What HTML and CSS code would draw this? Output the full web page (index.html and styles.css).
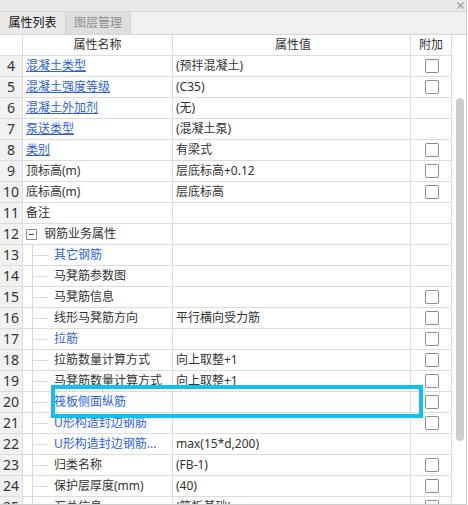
FILE: index.html
```html
<!DOCTYPE html>
<html lang="zh">
<head>
<meta charset="utf-8">
<title>属性列表</title>
<link rel="stylesheet" href="styles.css">
</head>
<body>
<div class="panel">
  <div class="titlebar">
    <svg class="close" width="7" height="7" viewBox="0 0 7 7"><path d="M0.5 0.5L6.5 6.5M6.5 0.5L0.5 6.5" stroke="#9c9c9c" stroke-width="1.1" fill="none"/></svg>
  </div>
  <div class="tabs">
    <div class="tab active">属性列表</div>
    <div class="tab inactive">图层管理</div>
  </div>
  <div class="content">
    <div class="grid">
      <div class="row head"><div class="num"></div><div class="name c">属性名称</div><div class="val c">属性值</div><div class="add c">附加</div></div>
      <div class="row"><div class="num">4</div><div class="name"><span class="link u">混凝土类型</span></div><div class="val">(预拌混凝土)</div><div class="add"><i class="cb"></i></div></div>
      <div class="row"><div class="num">5</div><div class="name"><span class="link u">混凝土强度等级</span></div><div class="val">(C35)</div><div class="add"><i class="cb"></i></div></div>
      <div class="row"><div class="num">6</div><div class="name"><span class="link u">混凝土外加剂</span></div><div class="val">(无)</div><div class="add"></div></div>
      <div class="row"><div class="num">7</div><div class="name"><span class="link u">泵送类型</span></div><div class="val">(混凝土泵)</div><div class="add"></div></div>
      <div class="row"><div class="num">8</div><div class="name"><span class="link u">类别</span></div><div class="val">有梁式</div><div class="add"><i class="cb"></i></div></div>
      <div class="row"><div class="num">9</div><div class="name">顶标高(m)</div><div class="val">层底标高+0.12</div><div class="add"><i class="cb"></i></div></div>
      <div class="row"><div class="num">10</div><div class="name">底标高(m)</div><div class="val">层底标高</div><div class="add"><i class="cb"></i></div></div>
      <div class="row"><div class="num">11</div><div class="name">备注</div><div class="val"></div><div class="add"></div></div>
      <div class="row"><div class="num">12</div><div class="name group"><span class="toggle"></span><span>钢筋业务属性</span></div><div class="val"></div><div class="add"></div></div>
      <div class="row"><div class="num">13</div><div class="name child"><span class="tree"></span><span class="link">其它钢筋</span></div><div class="val"></div><div class="add"></div></div>
      <div class="row"><div class="num">14</div><div class="name child"><span class="tree"></span><span>马凳筋参数图</span></div><div class="val"></div><div class="add"></div></div>
      <div class="row"><div class="num">15</div><div class="name child"><span class="tree"></span><span>马凳筋信息</span></div><div class="val"></div><div class="add"><i class="cb"></i></div></div>
      <div class="row"><div class="num">16</div><div class="name child"><span class="tree"></span><span>线形马凳筋方向</span></div><div class="val">平行横向受力筋</div><div class="add"><i class="cb"></i></div></div>
      <div class="row"><div class="num">17</div><div class="name child"><span class="tree"></span><span class="link">拉筋</span></div><div class="val"></div><div class="add"><i class="cb"></i></div></div>
      <div class="row"><div class="num">18</div><div class="name child"><span class="tree"></span><span>拉筋数量计算方式</span></div><div class="val">向上取整+1</div><div class="add"><i class="cb"></i></div></div>
      <div class="row"><div class="num">19</div><div class="name child"><span class="tree"></span><span>马凳筋数量计算方式</span></div><div class="val">向上取整+1</div><div class="add"><i class="cb"></i></div></div>
      <div class="row"><div class="num">20</div><div class="name child"><span class="tree"></span><span class="link">筏板侧面纵筋</span></div><div class="val"></div><div class="add"><i class="cb"></i></div></div>
      <div class="row"><div class="num">21</div><div class="name child"><span class="tree"></span><span class="link">U形构造封边钢筋</span></div><div class="val"></div><div class="add"><i class="cb"></i></div></div>
      <div class="row"><div class="num">22</div><div class="name child"><span class="tree"></span><span class="link">U形构造封边钢筋...</span></div><div class="val">max(15*d,200)</div><div class="add"></div></div>
      <div class="row"><div class="num">23</div><div class="name child"><span class="tree"></span><span>归类名称</span></div><div class="val">(FB-1)</div><div class="add"><i class="cb"></i></div></div>
      <div class="row"><div class="num">24</div><div class="name child"><span class="tree"></span><span>保护层厚度(mm)</span></div><div class="val">(40)</div><div class="add"><i class="cb"></i></div></div>
      <div class="row"><div class="num">25</div><div class="name child"><span class="tree"></span><span>汇总信息</span></div><div class="val">(筏板基础)</div><div class="add"><i class="cb"></i></div></div>
    </div>
    <div class="scroll"><div class="thumb"></div></div>
    <div class="highlight"></div>
  </div>
</div>
</body>
</html>
```
FILE: styles.css
```css
html, body {
  margin: 0;
  padding: 0;
  background: #fff;
}
body {
  font-family: "Noto Sans", "Noto Sans CJK SC", sans-serif;
  font-size: 12px;
  color: #333;
}
.panel {
  width: 467px;
  box-sizing: border-box;
  border-right: 1px solid #cfcfcf;
  border-bottom: 1px solid #cfcfcf;
}
.titlebar {
  height: 12px;
  box-sizing: border-box;
  background: #e9e9e9;
  border-bottom: 1px solid #d6d6d6;
  display: flex;
  justify-content: flex-end;
  align-items: center;
  padding-right: 2px;
}
.close {
  display: block;
}
.tabs {
  height: 23px;
  box-sizing: border-box;
  background: #f0f0f0;
  border-bottom: 1px solid #d4d4d4;
  display: flex;
}
.tab {
  line-height: 22px;
  text-align: center;
  border-right: 1px solid #d2d2d2;
  box-sizing: border-box;
}
.tab.active {
  width: 66px;
  background: #e9e9e9;
  color: #111;
}
.tab.inactive {
  width: 65px;
  background: #dedede;
  color: #8e8e8e;
}
.content {
  display: flex;
  height: 469px;
  overflow: hidden;
  position: relative;
}
.grid {
  width: 452px;
  flex: none;
}
.row {
  display: grid;
  grid-template-columns: 23px 150px 238px 41px;
  height: 21px;
  box-sizing: border-box;
  border-bottom: 1px solid #dcdcdc;
}
.row > div {
  border-right: 1px solid #dcdcdc;
  box-sizing: border-box;
  height: 20px;
  line-height: 20px;
  white-space: nowrap;
  overflow: hidden;
}
.num {
  background: #f1f1f1;
  text-align: center;
  font-size: 14px;
  color: #333;
}
.head .num {
  background: #fff;
}
.c {
  text-align: center;
}
.name {
  padding-left: 3px;
  display: flex;
  align-items: center;
}
.name.c {
  display: block;
  padding-left: 0;
}
.val {
  padding-left: 3px;
}
.add {
  display: flex;
  align-items: center;
  justify-content: center;
}
.add.c {
  display: block;
}
.link {
  color: #2e5fdf;
}
.link.u {
  text-decoration: underline;
  text-underline-offset: 1px;
}
.cb {
  display: block;
  width: 14px;
  height: 14px;
  box-sizing: border-box;
  border: 1px solid #8e8e8e;
  border-radius: 2px;
  background: #fff;
  margin-left: 1px;
}
.group {
  position: relative;
}
.toggle {
  width: 11px;
  height: 11px;
  box-sizing: border-box;
  border: 1px solid #8a8a8a;
  border-radius: 1px;
  margin-right: 7px;
  flex: none;
  background: linear-gradient(#444, #444) center / 5px 1px no-repeat;
}
.name.child {
  padding-left: 9px;
}
.tree {
  flex: none;
  width: 16px;
  height: 20px;
  margin-right: 6px;
  border-left: 1px solid #d9d9d9;
  box-sizing: border-box;
  background: linear-gradient(#d9d9d9, #d9d9d9) right center / 15px 1px no-repeat;
}
.scroll {
  width: 14px;
  flex: none;
  box-sizing: border-box;
  padding: 63px 0 0 4px;
}
.thumb {
  width: 8px;
  height: 343px;
  border-radius: 4px;
  background: #cdcdcd;
}
.highlight {
  position: absolute;
  left: 51px;
  top: 350px;
  width: 372px;
  height: 33px;
  box-sizing: border-box;
  border: 4px solid #0ec1f5;
}
```
